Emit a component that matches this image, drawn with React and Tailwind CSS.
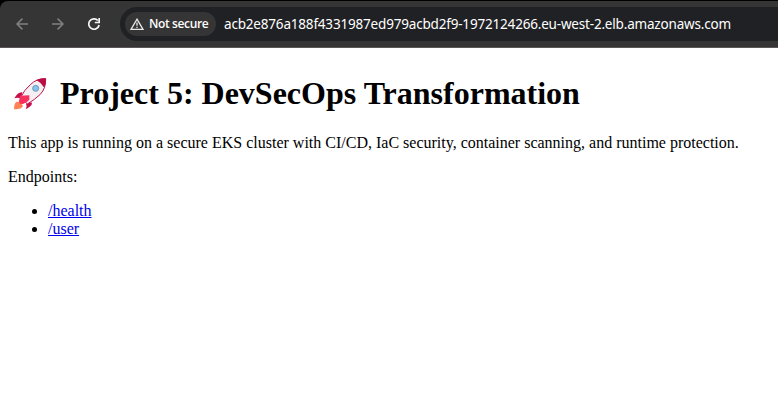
function Rocket() {
  return (
    <svg className="h-[34px] w-11 shrink-0" viewBox="24 30 132 102" role="img" aria-label="rocket">
      <path d="M50 104 C42 109 43 119 42 127 C51 126 64 127 69 117 L60 105Z" fill="#ff8257" />
      <path d="M67 76 Q54 74 43 94 Q53 90 63 95Z" fill="#c70f4b" />
      <path d="M94 106 Q102 113 78 127 Q82 117 78 110Z" fill="#c70f4b" />
      <path d="M137 35 Q110 34 91 53 Q73 68 62 91 L82 111 Q104 98 121 82 Q138 64 137 35Z" fill="#f3eff3" stroke="#c70f4b" strokeWidth="3" />
      <path d="M137 34 Q122 33 109 39 Q121 45 133 62 Q140 49 137 34Z" fill="#b80e45" />
      <circle cx="107" cy="64" r="9" fill="#83c5f2" stroke="#7797af" strokeWidth="3" />
      <path d="M60 86 L88 85 L88 98 Q80 108 63 112 Q54 104 58 98Z" fill="#f8305f" />
    </svg>
  );
}

function Toolbar() {
  return (
    <header className="h-12 border-t border-b border-t-black border-b-[#5b5758] bg-black font-['Noto_Sans',sans-serif]">
      <div className="flex h-full items-center rounded-tl-lg bg-[#353535] pl-4">
        <svg className="h-3 w-3 shrink-0" viewBox="0 0 12 12" fill="none" stroke="#818181" strokeWidth="1.5">
          <path d="M12 6H1M6.4.6L1 6l5.4 5.4" />
        </svg>
        <svg className="ml-6 h-3 w-3 shrink-0" viewBox="0 0 12 12" fill="none" stroke="#818181" strokeWidth="1.5">
          <path d="M0 6h11M5.6.6L11 6l-5.4 5.4" />
        </svg>
        <svg className="ml-6 h-3 w-3 shrink-0" viewBox="0 0 12 12" fill="none" stroke="#f5f5f5" strokeWidth="1.7">
          <path d="M9.8 2.5A5.2 5.2 0 1 0 11.1 7M11.2 0v4.5H6.8" />
        </svg>
        <div className="ml-5 flex h-[34px] flex-1 items-center rounded-l-full bg-[#202124] pl-[5px]">
          <div className="flex h-6 w-[91px] shrink-0 items-center rounded-full bg-[#353535] pl-[5px]">
            <svg className="h-3 w-3.5 shrink-0" viewBox="0 0 14 12" fill="none" stroke="#e7e7e7" strokeWidth="1.3">
              <path d="M7 1.2L13 11.3H1Z" />
              <path d="M7 4.5v3.2M7 8.8v1.3" />
            </svg>
            <span className="ml-[5px] whitespace-nowrap font-['Open_Sans',sans-serif] text-[12px] leading-4 font-semibold tracking-[-0.38px] text-white">Not secure</span>
          </div>
          <span className="ml-2 whitespace-nowrap text-[13.5px] leading-5 tracking-[-0.185px] text-white">acb2e876a188f4331987ed979acbd2f9-1972124266.eu-west-2.elb.amazonaws.com</span>
        </div>
      </div>
    </header>
  );
}

export default function App() {
  return (
    <div className="min-h-[410px] overflow-hidden bg-white text-black">
      <Toolbar />
      <main className="px-2 pt-[27px] font-['Liberation_Serif','Times_New_Roman',serif] text-base leading-[18px]">
        <h1 className="flex h-[37px] items-center gap-2 whitespace-nowrap text-[32px] leading-[37px] font-bold">
          <Rocket />
          <span>Project 5: DevSecOps Transformation</span>
        </h1>
        <p className="mt-[22px]">This app is running on a secure EKS cluster with CI/CD, IaC security, container scanning, and runtime protection.</p>
        <p className="mt-4">Endpoints:</p>
        <ul className="mt-4 list-disc pl-10">
          <li><a className="text-[#0000ee] underline" href="#health">/health</a></li>
          <li><a className="text-[#0000ee] underline" href="#user">/user</a></li>
        </ul>
      </main>
    </div>
  );
}
